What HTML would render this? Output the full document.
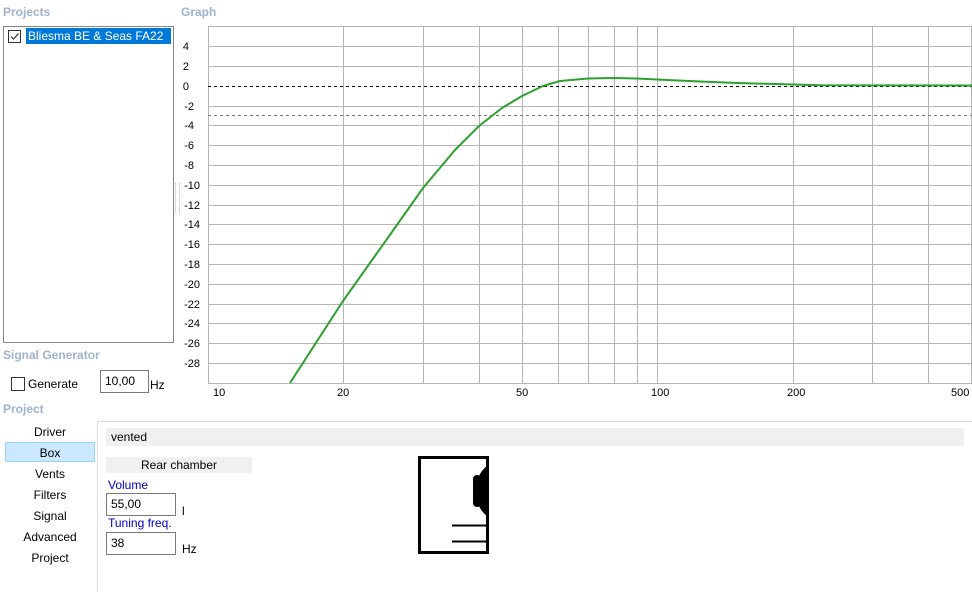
<!DOCTYPE html>
<html><head><style>
body{margin:0;width:972px;height:581px;background:#fff;font-family:"Liberation Sans",sans-serif;font-size:12px;color:#000;position:relative;overflow:hidden}
.a{position:absolute}
.hd{color:#9fb3cc;font-weight:bold;font-size:12px}
.inp{position:absolute;border:1px solid #7a7a7a;background:#fff;box-sizing:border-box;padding:3px 0 0 4px}
.nav{position:absolute;left:5px;width:90px;text-align:center}
</style></head><body>
<div class="a hd" style="left:3px;top:5px">Projects</div>
<div class="a hd" style="left:181px;top:5px">Graph</div>
<div class="a" style="left:3px;top:26px;width:169px;height:315px;border:1px solid #828790"></div>
<div class="a" style="left:8px;top:30px;width:11px;height:11px;border:1px solid #333;background:#fff"><svg width="11" height="11" style="position:absolute;left:0;top:0"><path d="M2 5.5 L4.5 8 L9.5 2.5" stroke="#333" fill="none" stroke-width="1.2"/></svg></div>
<div class="a" style="left:26px;top:28px;width:145px;height:16px;background:#0078d7;color:#fff;padding-left:2px;line-height:16px;box-sizing:border-box">Bliesma BE &amp; Seas FA22</div>
<div class="a" style="left:175px;top:183px;width:3px;height:30px;border-left:1px dotted #bbb;border-right:1px dotted #bbb"></div>
<div class="a hd" style="left:3px;top:348px">Signal Generator</div>
<div class="a" style="left:11px;top:377px;width:12px;height:12px;border:1px solid #333"></div>
<div class="a" style="left:28px;top:377px">Generate</div>
<div class="inp" style="left:100px;top:370px;width:49px;height:23px;padding-top:3px">10,00</div>
<div class="a" style="left:150px;top:378px">Hz</div>
<div class="a hd" style="left:3px;top:402px">Project</div>
<div class="a" style="left:97px;top:421px;width:880px;height:170px;border-top:1px solid #dcdcdc;border-left:1px solid #dcdcdc"></div>
<div class="a" style="left:5px;top:442px;width:88px;height:18px;background:#cce8ff;border:1px solid #99d1ff"></div>
<div class="nav" style="top:425px">Driver</div>
<div class="nav" style="top:446px">Box</div>
<div class="nav" style="top:467px">Vents</div>
<div class="nav" style="top:488px">Filters</div>
<div class="nav" style="top:509px">Signal</div>
<div class="nav" style="top:530px">Advanced</div>
<div class="nav" style="top:551px">Project</div>
<div class="a" style="left:106px;top:428px;width:858px;height:18px;background:#f0f0f0;padding-left:5px;line-height:18px;box-sizing:border-box">vented</div>
<div class="a" style="left:106px;top:457px;width:146px;height:16px;background:#f0f0f0;text-align:center;line-height:16px">Rear chamber</div>
<div class="a" style="left:108px;top:478px;color:#0000c0">Volume</div>
<div class="inp" style="left:106px;top:493px;width:70px;height:23px">55,00</div>
<div class="a" style="left:182px;top:504px">l</div>
<div class="a" style="left:108px;top:516px;color:#0000c0">Tuning freq.</div>
<div class="inp" style="left:106px;top:532px;width:70px;height:23px">38</div>
<div class="a" style="left:182px;top:542px">Hz</div>
<svg class="a" style="left:415px;top:455px" width="80" height="102">
<rect x="4.5" y="2.5" width="68" height="95" fill="#fff" stroke="#000" stroke-width="3"/>
<rect x="58" y="20" width="8" height="32" rx="4" fill="#000"/>
<path d="M73 10 Q60 20 62 36 Q60 52 73 62 Z" fill="#000"/>
<line x1="37" y1="70.5" x2="73" y2="70.5" stroke="#000" stroke-width="2"/>
<line x1="37" y1="86.5" x2="73" y2="86.5" stroke="#000" stroke-width="2"/>
<rect x="74" y="0" width="6" height="102" fill="#fff"/>
</svg>
<svg class="a" style="left:170px;top:20px" width="802" height="385" font-family="Liberation Sans" font-size="11">
<g stroke="#b4b4b4" stroke-width="1">
<line x1="38.5" y1="6" x2="38.5" y2="363"/>
<line x1="38" y1="6.5" x2="802" y2="6.5"/>
<line x1="38" y1="26.5" x2="802" y2="26.5"/>
<line x1="38" y1="46.5" x2="802" y2="46.5"/>
<line x1="38" y1="86.5" x2="802" y2="86.5"/>
<line x1="38" y1="105.5" x2="802" y2="105.5"/>
<line x1="38" y1="125.5" x2="802" y2="125.5"/>
<line x1="38" y1="145.5" x2="802" y2="145.5"/>
<line x1="38" y1="165.5" x2="802" y2="165.5"/>
<line x1="38" y1="185.5" x2="802" y2="185.5"/>
<line x1="38" y1="204.5" x2="802" y2="204.5"/>
<line x1="38" y1="224.5" x2="802" y2="224.5"/>
<line x1="38" y1="244.5" x2="802" y2="244.5"/>
<line x1="38" y1="264.5" x2="802" y2="264.5"/>
<line x1="38" y1="284.5" x2="802" y2="284.5"/>
<line x1="38" y1="303.5" x2="802" y2="303.5"/>
<line x1="38" y1="323.5" x2="802" y2="323.5"/>
<line x1="38" y1="343.5" x2="802" y2="343.5"/>
<line x1="38" y1="363.5" x2="802" y2="363.5"/>
<line x1="173.5" y1="6" x2="173.5" y2="363"/>
<line x1="253.5" y1="6" x2="253.5" y2="363"/>
<line x1="309.5" y1="6" x2="309.5" y2="363"/>
<line x1="352.5" y1="6" x2="352.5" y2="363"/>
<line x1="388.5" y1="6" x2="388.5" y2="363"/>
<line x1="418.5" y1="6" x2="418.5" y2="363"/>
<line x1="444.5" y1="6" x2="444.5" y2="363"/>
<line x1="467.5" y1="6" x2="467.5" y2="363"/>
<line x1="487.5" y1="6" x2="487.5" y2="363"/>
<line x1="623.5" y1="6" x2="623.5" y2="363"/>
<line x1="702.5" y1="6" x2="702.5" y2="363"/>
<line x1="758.5" y1="6" x2="758.5" y2="363"/>
<line x1="801.5" y1="6" x2="801.5" y2="363"/>
</g>
<line x1="38" y1="66.5" x2="802" y2="66.5" stroke="#000" stroke-dasharray="3,3"/>
<line x1="38" y1="95.5" x2="802" y2="95.5" stroke="#777" stroke-dasharray="3,3"/>
<path d="M120 363 L173 281 L217 219 L253 168 L285 130 L309 106 L332 88 L352 76 L373 66 L390 61 L418 58.5 L444 58 L467 58.5 L487 59.5 L530 61.5 L567 63 L623 64.5 L650 65.3 L802 65.5" fill="none" stroke="#2ca02c" stroke-width="2" stroke-linejoin="round"/>
<g text-anchor="end" fill="#000">
<text x="19" y="30">4</text><text x="19" y="50">2</text><text x="19" y="70">0</text>
<text x="24" y="90">-2</text><text x="24" y="109">-4</text><text x="24" y="129">-6</text><text x="24" y="149">-8</text>
<text x="30" y="169">-10</text><text x="30" y="189">-12</text><text x="30" y="208">-14</text><text x="30" y="228">-16</text><text x="30" y="248">-18</text><text x="30" y="268">-20</text><text x="30" y="288">-22</text><text x="30" y="307">-24</text><text x="30" y="327">-26</text><text x="30" y="347">-28</text>
</g>
<g fill="#000"><text x="43" y="376">10</text><text x="167" y="376">20</text><text x="346" y="376">50</text><text x="481" y="376">100</text><text x="617" y="376">200</text><text x="781" y="376">500</text></g>
</svg>
</body></html>
